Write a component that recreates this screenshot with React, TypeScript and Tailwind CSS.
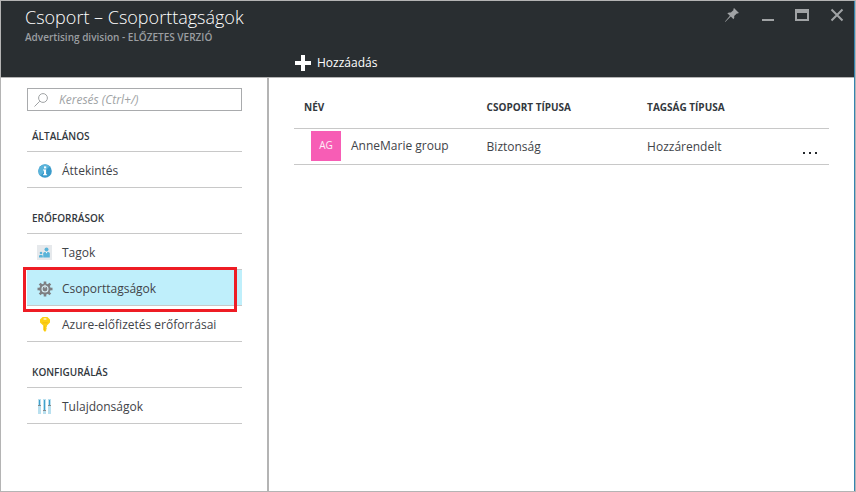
import type { ReactNode } from "react";

type Item = { label: string; icon: ReactNode; active?: boolean };
type Section = { title: string; items: Item[] };

function InfoIcon() {
  return (
    <svg viewBox="0 0 14 14" className="size-[14px]" aria-hidden="true">
      <circle cx="7" cy="7" r="6.8" fill="#3a9bcb" />
      <path d="M2.2 11.8A6.8 6.8 0 0 1 11.8 2.2Z" fill="#5bb4da" />
      <rect x="6" y="2.4" width="2.2" height="2" fill="#fff" />
      <path d="M5 5.6h3.1v4.6h1v1H5v-1h1V6.6H5z" fill="#fff" />
    </svg>
  );
}

function MembersIcon() {
  return (
    <svg viewBox="0 0 15 15" className="size-[15px]" aria-hidden="true">
      <rect width="15" height="15" fill="#e6e9ec" />
      <circle cx="9.5" cy="4.6" r="2" fill="#59b4d9" />
      <path d="M6.2 12.5V8.6q0-1.6 1.6-1.6h3.4q1.6 0 1.6 1.6v3.9z" fill="#59b4d9" />
      <path d="m8.6 7 .9 1.6.9-1.6z" fill="#fff" />
      <circle cx="4" cy="8" r="1.3" fill="#59b4d9" />
      <path d="M2 12.5v-1.4q0-1.2 1.2-1.2h1.4q1.2 0 1.2 1.2v1.4z" fill="#59b4d9" />
    </svg>
  );
}

function GearIcon() {
  return (
    <svg viewBox="0 0 16 16" className="size-[16px]" aria-hidden="true">
      <g fill="#7d7f82">
        <path d="M6.7 .5h2.6v15H6.7z" />
        <path d="M6.7 .5h2.6v15H6.7z" transform="rotate(45 8 8)" />
        <path d="M6.7 .5h2.6v15H6.7z" transform="rotate(90 8 8)" />
        <path d="M6.7 .5h2.6v15H6.7z" transform="rotate(135 8 8)" />
        <circle cx="8" cy="8" r="5.6" />
      </g>
      <circle cx="8" cy="8" r="3" fill="none" stroke="#d8eef4" strokeWidth="1.1" />
      <path d="M8 3.8v3.4" stroke="#d8eef4" strokeWidth="1" />
    </svg>
  );
}

function KeyIcon() {
  return (
    <svg viewBox="0 0 10 15" className="h-[15px] w-[10px]" aria-hidden="true">
      <path d="M2.6 0h4.8L10 2.6v3L7 8.6v.9l-.8.8.8.9-.8.9.3 1L5 15l-1.8-1.9V8.6L0 5.6v-3z" fill="#fcd116" />
      <path d="M3.6 1.4h2.8v1.2H3.6z" fill="#fff" />
      <path d="M2.4 5.4h5.2v.9H2.4z" fill="#f2b90f" />
      <path d="M4.3 8.4h.8v5h-.8z" fill="#f2b90f" />
    </svg>
  );
}

function SlidersIcon() {
  return (
    <svg viewBox="0 0 13 15" className="h-[15px] w-[13px]" aria-hidden="true">
      <path d="M0 0h3v15H0zM5 0h3v15H5zM10 0h3v15h-3z" fill="#b9e0ef" />
      <path d="M1 1h1v5H1zM6 1h1v10H6zM11 1h1v5h-1z" fill="#3f9fcb" />
      <path d="M0 6h3v1H0zM5 11h3v1H5zM10 6h3v1h-3z" fill="#85898b" />
    </svg>
  );
}

const sections: Section[] = [
  { title: "ÁLTALÁNOS", items: [{ label: "Áttekintés", icon: <InfoIcon /> }] },
  {
    title: "ERŐFORRÁSOK",
    items: [
      { label: "Tagok", icon: <MembersIcon /> },
      { label: "Csoporttagságok", icon: <GearIcon />, active: true },
      { label: "Azure-előfizetés erőforrásai", icon: <KeyIcon /> },
    ],
  },
  { title: "KONFIGURÁLÁS", items: [{ label: "Tulajdonságok", icon: <SlidersIcon /> }] },
];

function MenuItem({ label, icon, active }: Item) {
  return (
    <li className={active ? "relative border-b border-[#c8c8c8] bg-[#bfeffb]" : "border-b border-[#c8c8c8]"}>
      <a href="#" aria-current={active ? "page" : undefined} className="flex h-[35px] items-center pt-[2px]">
        <span className="flex w-[35px] justify-center">{icon}</span>
        <span className="text-xs whitespace-nowrap text-[#3f4449]">{label}</span>
      </a>
      {active && <span className="pointer-events-none absolute -top-[3px] right-[5px] -bottom-[7px] -left-[4px] border-3 border-[#ee1c24]" />}
    </li>
  );
}

function Header() {
  return (
    <header className="flex flex-col justify-between border-b border-[#b4b4b4] bg-[#292e31]">
      <div className="flex justify-between pt-1 pr-[10px] pl-6">
        <div>
          <h1 className="text-lg leading-6 font-light text-white">Csoport – Csoporttagságok</h1>
          <p className="text-[10px] leading-4 font-semibold text-[#9b9ea1]">Advertising division - ELŐZETES VERZIÓ</p>
        </div>
        <div className="flex h-5 items-center gap-[21px] text-[#a0a3a5]">
          <button type="button" aria-label="Rögzítés">
            <svg viewBox="0 0 14 14" className="size-[14px]" fill="currentColor">
              <path d="m9 0 5 5-1.6.6-.6-.2-2.6 2.6q.5 2-.7 3.3L5.8 8.6.2 14 0 13.6 4.9 7.8 2.3 5.2q1.6-1.2 3.6-.6l2.7-2.5-.3-.8z" />
            </svg>
          </button>
          <button type="button" aria-label="Kis méret">
            <svg viewBox="0 0 14 14" className="size-[14px]" fill="currentColor">
              <path d="M2 11h12v2H2z" />
            </svg>
          </button>
          <button type="button" aria-label="Teljes méret">
            <svg viewBox="0 0 14 14" className="size-[14px]" fill="currentColor">
              <path fillRule="evenodd" d="M0 1h14v12H0zM2 5v6h10V5z" />
            </svg>
          </button>
          <button type="button" aria-label="Bezárás">
            <svg viewBox="0 0 14 14" className="size-[14px]" fill="none" stroke="currentColor" strokeWidth="2">
              <path d="m1.5 1.5 11 11m0-11-11 11" />
            </svg>
          </button>
        </div>
      </div>
      <div className="flex h-8 pl-[294px]">
        <button type="button" className="mt-[7px] flex h-[22px] items-center gap-[6px] text-xs text-white">
          <svg viewBox="0 0 16 16" className="size-4" fill="currentColor" aria-hidden="true">
            <path d="M6 0h4v6h6v4h-6v6H6v-6H0V6h6z" />
          </svg>
          Hozzáadás
        </button>
      </div>
    </header>
  );
}

function Sidebar() {
  return (
    <nav className="w-[268px] shrink-0 border-r-2 border-[#b4b4b4] pt-[10px] pr-[25px] pl-[26px]">
      <div className="mb-[10px] flex h-[23px] items-center border border-[#a9abad] pl-[6px]">
        <label htmlFor="menu-search" aria-label="Keresés">
          <svg viewBox="0 0 14 14" className="size-[14px] shrink-0" fill="none" stroke="#a0a3a5" aria-hidden="true">
            <circle cx="9" cy="5" r="4.4" />
            <path d="M5.8 8.2.5 13.5" />
          </svg>
        </label>
        <input
          id="menu-search"
          type="text"
          placeholder="Keresés (Ctrl+/)"
          className="ml-[11px] min-w-0 flex-1 bg-transparent text-xs italic outline-none placeholder:text-[#a0a3a5]"
        />
      </div>
      {sections.map((section) => (
        <section key={section.title} className="mb-[15px]">
          <h2 className="flex h-[31px] items-center border-b border-[#c8c8c8] pl-[5px] text-[10px] font-semibold text-[#33383d]">
            {section.title}
          </h2>
          <ul>
            {section.items.map((item) => (
              <MenuItem key={item.label} {...item} />
            ))}
          </ul>
        </section>
      ))}
    </nav>
  );
}

function GroupTable() {
  return (
    <main className="min-w-0 flex-1 px-[25px] pt-[10px]">
      <table className="w-full table-fixed border-collapse text-left text-xs text-[#3f4449]">
        <thead>
          <tr className="h-10 border-b border-[#c8c8c8] text-[10px] text-[#33383d]">
            <th className="w-[36%] pl-[10px] font-bold">NÉV</th>
            <th className="w-[30%] font-bold">CSOPORT TÍPUSA</th>
            <th className="font-bold">TAGSÁG TÍPUSA</th>
            <th className="w-10" aria-label="Műveletek" />
          </tr>
        </thead>
        <tbody>
          <tr className="h-9 border-b border-[#c8c8c8]">
            <td className="pl-[17px]">
              <div className="flex items-center gap-[10px]">
                <span className="flex size-[30px] items-center justify-center bg-[#f75db5] text-[10px] text-white/90">AG</span>
                <span>AnneMarie group</span>
              </div>
            </td>
            <td className="pt-[2px]">Biztonság</td>
            <td className="pt-[2px]">Hozzárendelt</td>
            <td>
              <button type="button" aria-label="További műveletek" className="flex h-4 w-full items-end justify-end gap-1 pr-3">
                <span className="size-[2px] bg-[#25292d]" />
                <span className="size-[2px] bg-[#25292d]" />
                <span className="size-[2px] bg-[#25292d]" />
              </button>
            </td>
          </tr>
        </tbody>
      </table>
    </main>
  );
}

export default function App() {
  return (
    <div className="flex min-h-screen flex-col border border-[#b4b4b4] bg-white font-['Open_Sans','Noto_Sans',sans-serif]">
      <div className="flex flex-1 flex-col border-r border-[#3584b0]">
        <Header />
        <div className="flex flex-1">
          <Sidebar />
          <GroupTable />
        </div>
      </div>
    </div>
  );
}
